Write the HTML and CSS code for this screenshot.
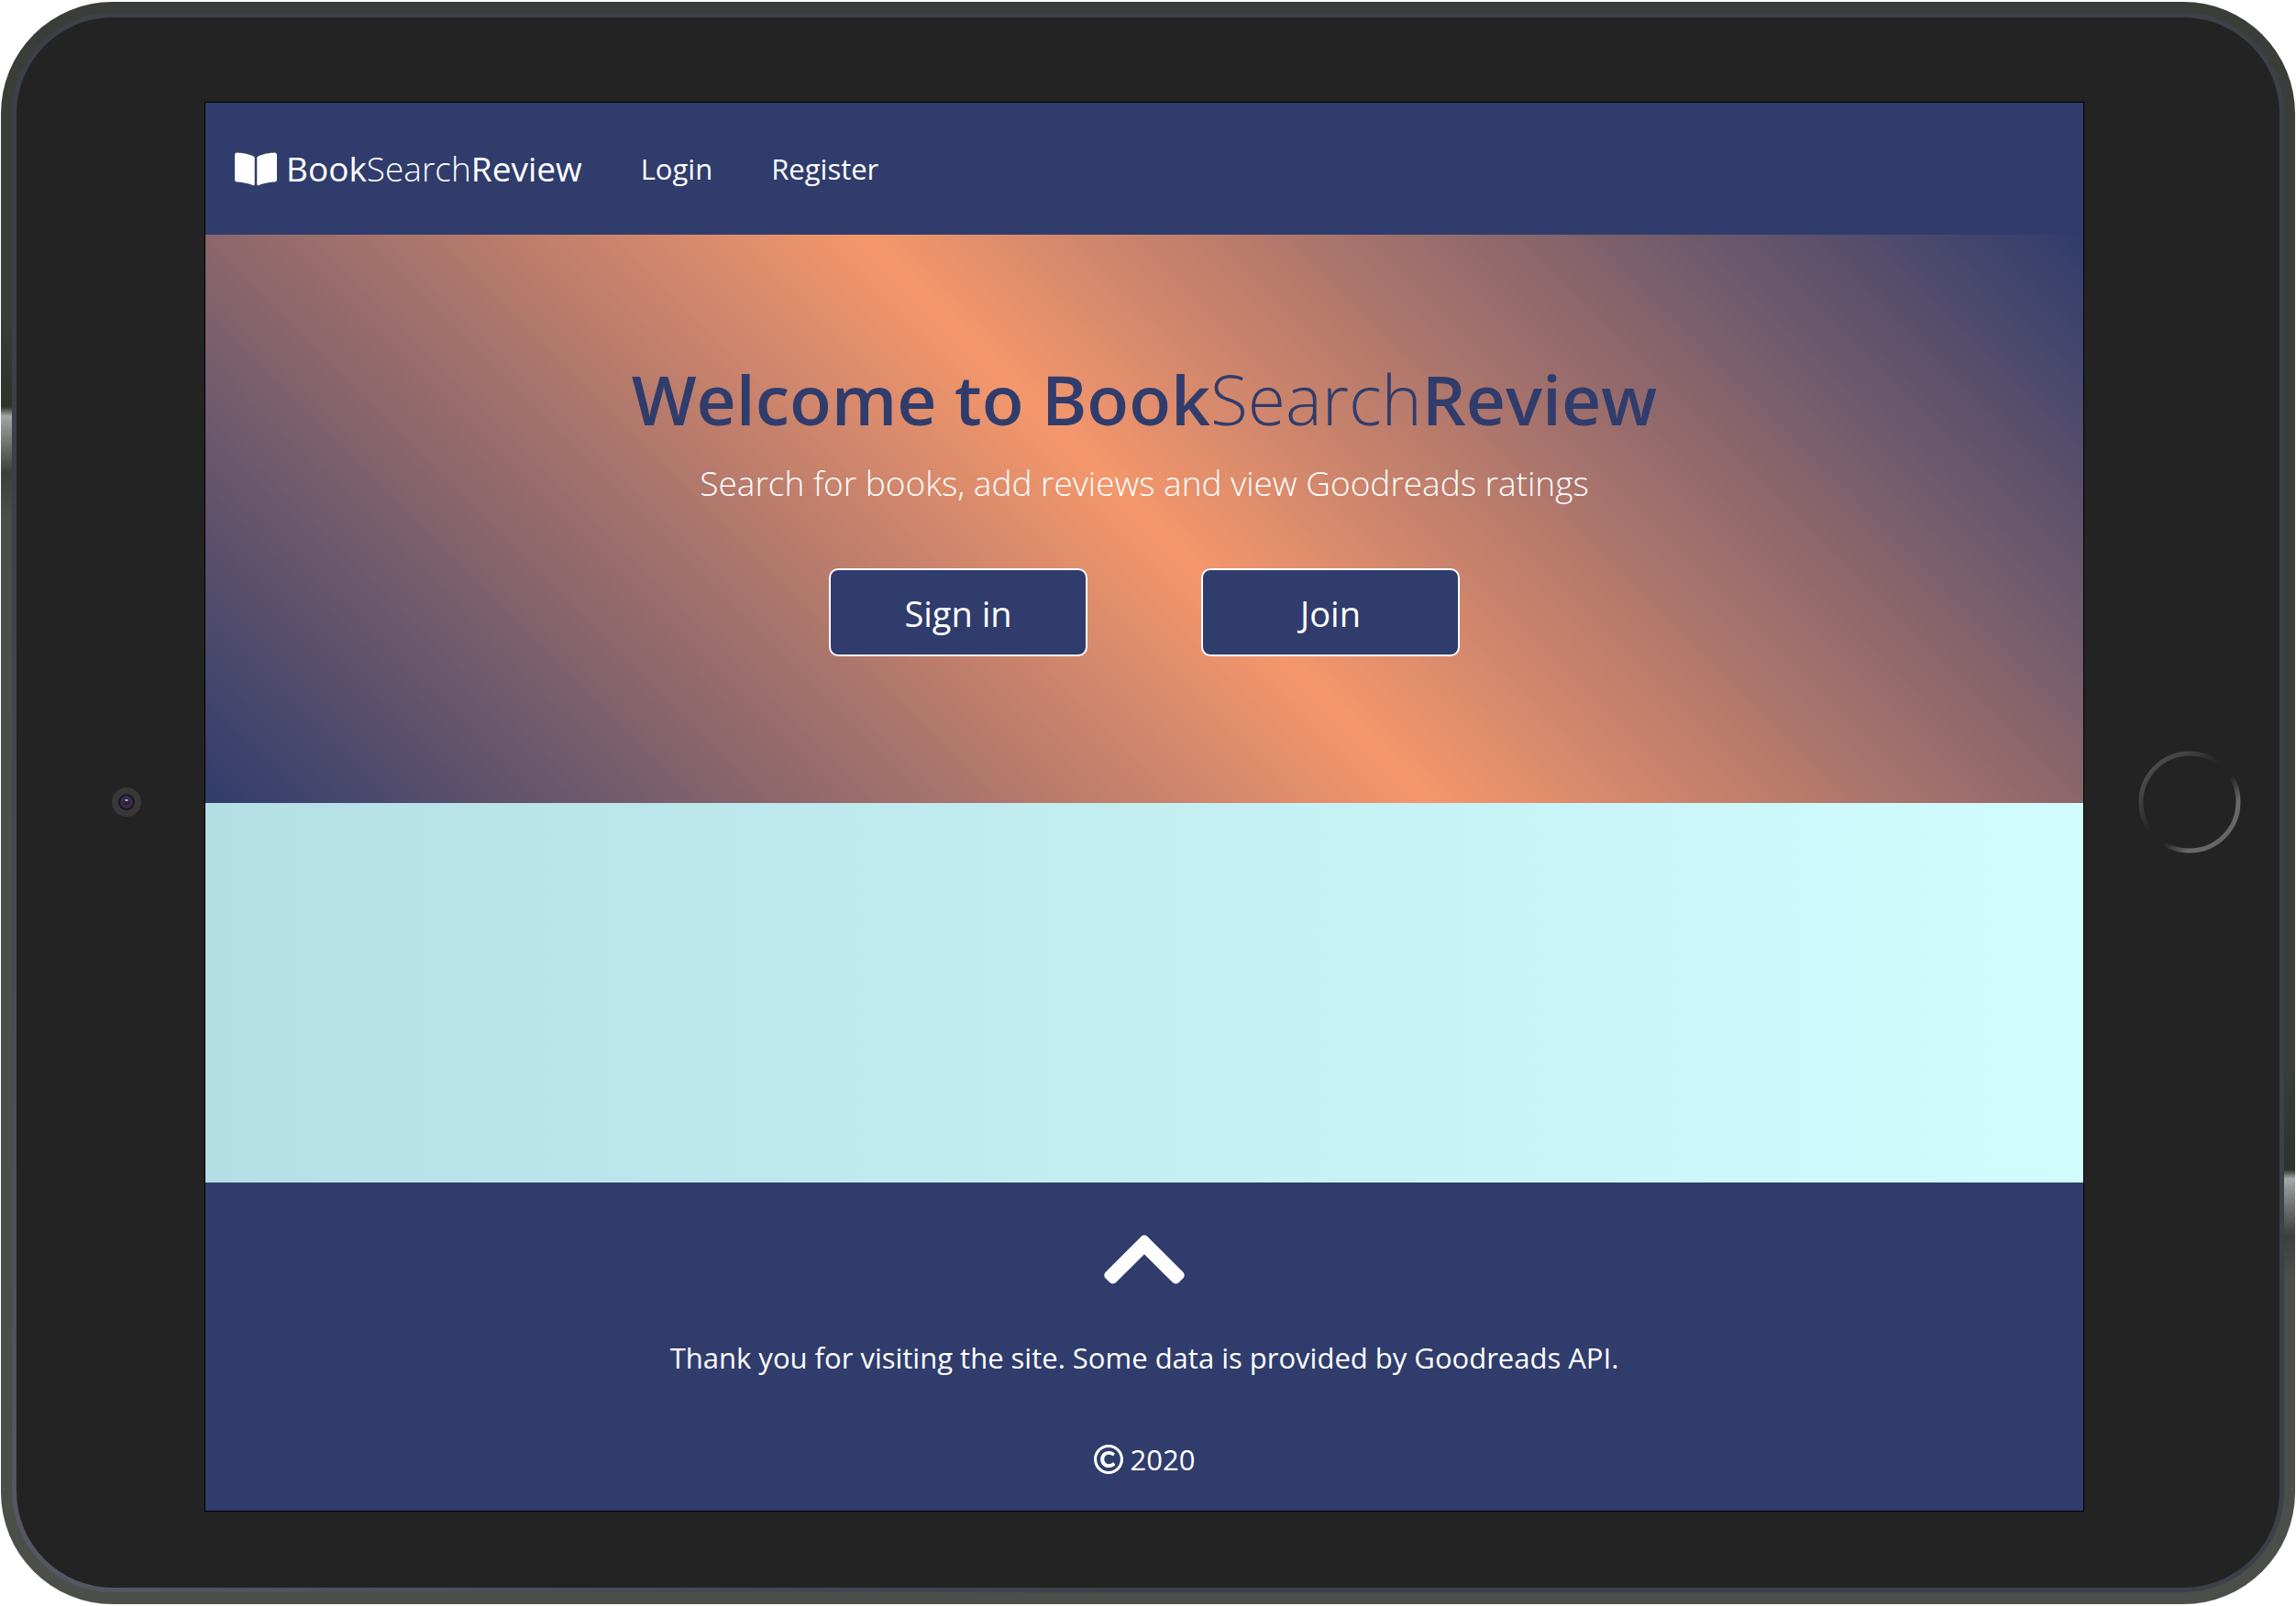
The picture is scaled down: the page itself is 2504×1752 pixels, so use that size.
FILE: index.html
```html
<!DOCTYPE html>
<html lang="en">
<head>
<meta charset="utf-8">
<meta name="viewport" content="width=device-width, initial-scale=1">
<title>BookSearchReview</title>
<link rel="stylesheet" href="styles.css">
</head>
<body>
<div class="device">
  <div class="bezel">
    <div class="side">
      <svg class="camera" viewBox="0 0 32 32" aria-hidden="true">
        <circle cx="16" cy="16" r="16" fill="#383838"/>
        <circle cx="16" cy="16" r="9" fill="#1c1a20"/>
        <circle cx="16" cy="16" r="6" fill="#37264f" stroke="#4a3a66" stroke-width="1"/>
        <circle cx="16" cy="16" r="3" fill="#2a2233"/>
        <ellipse cx="16" cy="14" rx="2" ry="1" fill="#b9b4c4"/>
      </svg>
    </div>
    <div class="screen">
      <header class="navbar">
        <a class="brand" href="#">
          <svg class="brand-icon" viewBox="0 0 576 512" aria-hidden="true"><path fill="currentColor" d="M542.22 32.05c-54.8 3.11-163.72 14.43-230.96 55.59-4.64 2.84-7.27 7.89-7.27 13.17v363.87c0 11.55 12.63 18.85 23.28 13.49 69.18-34.82 169.23-44.32 218.7-46.92 16.89-.89 30.02-14.43 30.02-30.66V62.75c.01-17.71-15.35-31.74-33.77-30.7zM264.73 87.64C197.5 46.48 88.58 35.17 33.78 32.05 15.36 31.01 0 45.04 0 62.75V400.6c0 16.24 13.13 29.78 30.02 30.66 49.49 2.6 149.59 12.11 218.77 46.95 10.62 5.35 23.21-1.94 23.21-13.46V100.63c0-5.29-2.62-10.14-7.27-12.99z"/></svg>
          <span class="name">Book<span class="thin">Search</span>Review</span>
        </a>
        <nav class="links">
          <a href="#">Login</a>
          <a href="#">Register</a>
        </nav>
      </header>
      <main>
        <section class="hero">
          <h1>Welcome to Book<span class="thin">Search</span>Review</h1>
          <p class="lead">Search for books, add reviews and view Goodreads ratings</p>
          <div class="actions">
            <button type="button" class="btn">Sign in</button>
            <button type="button" class="btn">Join</button>
          </div>
        </section>
        <section class="results"></section>
      </main>
      <footer class="footer">
        <a class="to-top" href="#" aria-label="Back to top">
          <svg viewBox="4 101 440 271" aria-hidden="true"><path fill="currentColor" d="M240.971 130.524l194.343 194.343c9.373 9.373 9.373 24.569 0 33.941l-22.667 22.667c-9.357 9.357-24.522 9.375-33.901.04L224 227.495 69.255 381.516c-9.379 9.335-24.544 9.317-33.901-.04l-22.667-22.667c-9.373-9.373-9.373-24.569 0-33.941L207.03 130.525c9.372-9.373 24.568-9.373 33.941-.001z" transform="translate(0 -20)"/></svg>
        </a>
        <p>Thank you for visiting the site. Some data is provided by Goodreads API.</p>
        <p class="copyright">
          <svg viewBox="8 8 496 496" aria-hidden="true"><path fill="currentColor" d="M256 8C119.033 8 8 119.033 8 256s111.033 248 248 248 248-111.033 248-248S392.967 8 256 8zm0 448c-110.532 0-200-89.451-200-200 0-110.531 89.451-200 200-200 110.532 0 200 89.451 200 200 0 110.532-89.451 200-200 200zm107.351-101.064c-9.614 9.712-45.53 41.396-104.065 41.396-82.43 0-140.484-61.425-140.484-141.567 0-79.152 60.275-139.401 139.762-139.401 55.531 0 88.738 26.62 97.593 34.779a11.965 11.965 0 0 1 1.936 15.322l-18.155 28.113c-3.841 5.95-11.966 7.282-17.499 2.921-8.595-6.776-31.814-22.538-61.708-22.538-48.303 0-77.916 35.33-77.916 80.082 0 41.589 26.888 83.692 78.277 83.692 32.657 0 56.843-19.039 65.726-27.225 5.27-4.857 13.596-4.039 17.82 1.738l19.865 27.17a11.947 11.947 0 0 1-1.152 15.518z"/></svg>
          <span>2020</span>
        </p>
      </footer>
    </div>
    <div class="side">
      <svg class="home" viewBox="0 0 112 112" aria-hidden="true">
        <defs>
          <linearGradient id="ring" x1="0" y1="0" x2="1" y2="1">
            <stop offset="0" stop-color="#505050"/>
            <stop offset=".2" stop-color="#464646"/>
            <stop offset=".45" stop-color="#232323"/>
            <stop offset=".58" stop-color="#232323"/>
            <stop offset=".75" stop-color="#6a6a6a"/>
            <stop offset="1" stop-color="#606060"/>
          </linearGradient>
        </defs>
        <circle cx="56" cy="56" r="53" fill="none" stroke="url(#ring)" stroke-width="5"/>
      </svg>
    </div>
  </div>
</div>
</body>
</html>
```
FILE: styles.css
```css
* {
  box-sizing: border-box;
}

body {
  margin: 0;
  background: #fff;
  color: #fff;
  font-family: "Open Sans", "Noto Sans", sans-serif;
  font-size: 31px;
  line-height: 48px;
}

a {
  color: inherit;
  text-decoration: none;
}

h1,
p {
  margin: 0;
}

svg {
  display: block;
}

.thin {
  font-weight: 300;
}

.device {
  margin: 2px 1px;
  padding: 12px 12px 13px;
  border-radius: 122px;
  background:
    linear-gradient(#2d322b, #a4a7a7 10px, #8b8d8d 24px, #4c4e4c 62px, #3c3f3c 72px, #4c4e4a 120px) left 442px / 50% 100% no-repeat,
    linear-gradient(#3a3d38, #3a3d38 1160px, #2d322b 1274px, #a4a7a7 1284px, #8b8d8d 1298px, #4c4e4c 1336px, #3c3f3c 1346px, #4c4e4a 1394px) right top / 50% 100% no-repeat,
    linear-gradient(#3a3d38, #3a3d38 340px, #2d322b 442px);
}

.bezel {
  display: grid;
  grid-template-columns: 206px 1fr 214px;
  padding: 93px 0 84px;
  border: 5px solid transparent;
  border-radius: 110px;
  background:
    linear-gradient(#232323, #232323) padding-box,
    radial-gradient(circle 1200px at 0 100%, #565964, #3d4049) border-box;
}

.side {
  display: grid;
  place-items: center;
  padding-bottom: 10px;
}

.camera {
  width: 32px;
  margin-left: 34px;
}

.home {
  width: 112px;
  margin-left: 18px;
}

.screen {
  outline: 1px solid #000;
  background: #303c6c;
}

.navbar {
  display: flex;
  align-items: center;
  gap: 64px;
  padding: 48px 32px;
}

.brand {
  display: flex;
  align-items: center;
  gap: 10px;
  font-size: 37px;
  font-weight: 500;
}

.brand-icon {
  width: 46px;
}

.links {
  display: flex;
  gap: 64px;
}

.hero {
  display: flex;
  flex-direction: column;
  align-items: center;
  padding: 131px 32px 160px;
  background: linear-gradient(45deg, #303c6c, #f4976c, #303c6c);
}

h1 {
  margin-bottom: 14px;
  color: #303c6c;
  font-size: 75px;
  font-weight: 600;
  line-height: 96px;
}

.lead {
  margin-bottom: 63px;
  font-size: 37px;
  font-weight: 300;
  line-height: 60px;
}

.actions {
  display: flex;
  gap: 124px;
}

.btn {
  width: 282px;
  padding: 17px 16px 15px;
  border: 2px solid #fff;
  border-radius: 10px;
  background: #303c6c;
  color: #fff;
  font: inherit;
  font-size: 38px;
  line-height: 60px;
}

.results {
  height: 414px;
  background: linear-gradient(to right, #b4dfe5, #d2fdff);
}

.footer {
  display: flex;
  flex-direction: column;
  align-items: center;
  padding: 57px 32px 32px;
}

.to-top {
  width: 88px;
  margin-bottom: 56px;
}

.copyright {
  display: flex;
  align-items: center;
  gap: 8px;
  margin-top: 63px;
}

.copyright svg {
  width: 32px;
}
```
